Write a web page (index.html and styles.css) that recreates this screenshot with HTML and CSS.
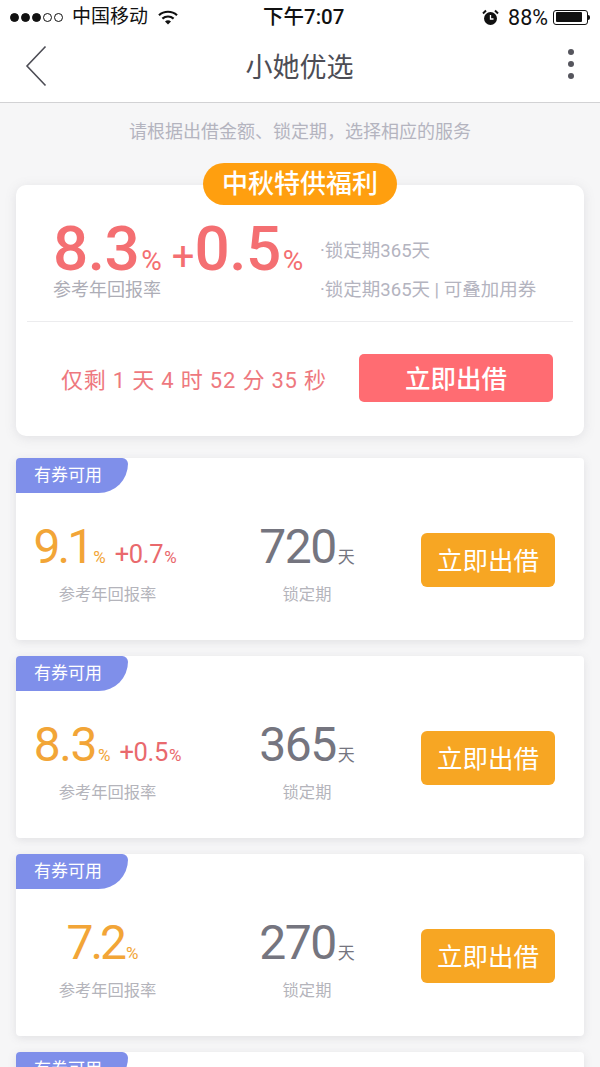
FILE: index.html
```html
<!DOCTYPE html>
<html lang="zh">
<head>
<meta charset="utf-8">
<title>小她优选</title>
<link rel="stylesheet" href="styles.css">
</head>
<body>
<div class="phone">
  <header class="top">
    <div class="status">
      <div class="status-left">
        <span class="dots"><i class="dot on"></i><i class="dot on"></i><i class="dot on"></i><i class="dot"></i><i class="dot"></i></span>
        <span class="carrier">中国移动</span>
        <svg class="wifi" width="20" height="15" viewBox="0 0 20 15"><path d="M1 5.200C6 .6 14 .6 19 5.200" fill="none" stroke="#111" stroke-width="2.200"/><path d="M4.400 8.600c3.200-2.800 8-2.800 11.200 0" fill="none" stroke="#111" stroke-width="2.200"/><path d="M7 11.400c1.800-1.400 4.200-1.400 6 0L10 14.600z" fill="#111"/></svg>
      </div>
      <div class="clock">下午7:07</div>
      <div class="status-right">
        <svg class="alarm" width="17" height="17" viewBox="0 0 17 17"><circle cx="8.500" cy="9.500" r="6.500" fill="#111"/><path d="M8.500 6v4H11.500" fill="none" stroke="#fff" stroke-width="1.300"/><path d="M1 4.500 4 1.500M16 4.500 13 1.500" stroke="#111" stroke-width="2"/></svg>
        <span class="pct">88%</span>
        <span class="battery"><span class="battery-fill"></span></span>
        <span class="battery-tip"></span>
      </div>
    </div>
    <nav class="nav">
      <svg class="back" width="22" height="42" viewBox="0 0 22 42"><path d="M20.500 1.500 2 21l18.500 19.500" fill="none" stroke="#4d4d55" stroke-width="1.600"/></svg>
      <h1 class="title">小她优选</h1>
      <div class="more"><i></i><i></i><i></i></div>
    </nav>
  </header>

  <p class="hint">请根据出借金额、锁定期，选择相应的服务</p>

  <section class="hero">
    <div class="pill">中秋特供福利</div>
    <div class="hero-top">
      <div class="hero-rate">
        <div class="hero-num"><span>8.3</span><small>%</small><em>+</em><span>0.5</span><small>%</small></div>
        <div class="hero-label">参考年回报率</div>
      </div>
      <ul class="hero-notes">
        <li>·锁定期365天</li>
        <li>·锁定期365天 | 可叠加用券</li>
      </ul>
    </div>
    <div class="hero-bottom">
      <div class="countdown">仅剩 1 天 4 时 52 分 35 秒</div>
      <button class="hero-btn">立即出借</button>
    </div>
  </section>

  <section class="card">
    <div class="tag">有券可用</div>
    <div class="row">
      <div class="col col-rate">
        <div class="val val-a"><span class="big tight orange">9.1</span><small class="orange">%</small><span class="plus">+0.7<small>%</small></span></div>
        <div class="cap">参考年回报率</div>
      </div>
      <div class="col col-term">
        <div class="val"><span class="big grey">720</span><small class="day">天</small></div>
        <div class="cap">锁定期</div>
      </div>
      <button class="btn">立即出借</button>
    </div>
  </section>

  <section class="card">
    <div class="tag">有券可用</div>
    <div class="row">
      <div class="col col-rate">
        <div class="val val-b"><span class="big orange">8.3</span><small class="orange">%</small><span class="plus">+0.5<small>%</small></span></div>
        <div class="cap">参考年回报率</div>
      </div>
      <div class="col col-term">
        <div class="val"><span class="big grey">365</span><small class="day">天</small></div>
        <div class="cap">锁定期</div>
      </div>
      <button class="btn">立即出借</button>
    </div>
  </section>

  <section class="card">
    <div class="tag">有券可用</div>
    <div class="row">
      <div class="col col-rate">
        <div class="val val-c"><span class="big tight orange">7.2</span><small class="orange">%</small></div>
        <div class="cap">参考年回报率</div>
      </div>
      <div class="col col-term">
        <div class="val"><span class="big grey">270</span><small class="day">天</small></div>
        <div class="cap">锁定期</div>
      </div>
      <button class="btn">立即出借</button>
    </div>
  </section>

  <section class="card">
    <div class="tag">有券可用</div>
  </section>
</div>
</body>
</html>
```
FILE: styles.css
```css
* { box-sizing: border-box; }
html, body { margin: 0; padding: 0; }
body {
  background: #f6f6f7;
  font-family: Roboto, "Noto Sans CJK SC", sans-serif;
  overflow: hidden;
}
.phone { width: 600px; height: 1067px; overflow: hidden; }

.top { background: #fff; height: 103px; border-bottom: 1px solid #d2d2d4; }
.status {
  height: 34px;
  display: grid;
  grid-template-columns: 253px auto 1fr;
  align-items: center;
  padding: 0 10px 0 10px;
  color: #111;
}
.status-left { display: flex; align-items: center; }
.dots { display: flex; gap: 2px; margin-right: 9px; }
.dot { width: 9px; height: 9px; border-radius: 50%; border: 1px solid #111; display: block; }
.dot.on { background: #111; }
.carrier { font-size: 19px; line-height: 34px; }
.wifi { margin-left: 10px; }
.clock { font-size: 20.500px; font-weight: 500; line-height: 34px; }
.status-right { display: flex; align-items: center; justify-content: flex-end; }
.pct { font-size: 21.500px; margin-left: 9px; margin-right: 5px; }
.alarm { display: block; }
.battery { width: 35px; height: 15px; border: 1px solid #111; border-radius: 3px; padding: 1.500px; display: block; }
.battery-fill { display: block; width: 88%; height: 100%; background: #111; border-radius: 1px; }
.battery-tip { width: 2px; height: 5px; background: #111; border-radius: 0 2px 2px 0; }

.nav {
  height: 68px;
  display: grid;
  grid-template-columns: 1fr auto 1fr;
  align-items: center;
  padding: 0 26px 0 25px;
}
.back { display: block; margin-top: -4px; }
.title { margin: 0; font-size: 27px; font-weight: 400; color: #4d4d55; line-height: 1; }
.more { display: flex; flex-direction: column; gap: 6px; margin-top: -8px; justify-self: end; }
.more i { display: block; width: 6px; height: 6px; border-radius: 50%; background: #55555d; }

.hint {
  margin: 0;
  height: 60px;
  text-align: center;
  font-size: 18px;
  line-height: 58px;
  color: #b4b4bf;
}

.hero {
  position: relative;
  margin: 22px 16px 22px;
  height: 251px;
  background: #fff;
  border-radius: 10px;
  box-shadow: 0 2px 12px rgba(120, 120, 130, .16);
  padding: 0 11px;
}
.pill {
  position: absolute;
  left: 187px;
  top: -22px;
  width: 194px;
  height: 42px;
  border-radius: 21px;
  background: #ff9f0f;
  color: #fff;
  font-size: 26px;
  font-weight: 500;
  line-height: 42px;
  text-align: center;
}
.hero-top {
  height: 137px;
  display: flex;
  border-bottom: 1px solid #ececee;
  padding: 36px 0 0 26px;
}
.hero-rate { width: 267px; flex: none; }
.hero-num { display: flex; align-items: baseline; color: #f46f72; line-height: 56px; height: 56px; font-weight: 500; white-space: nowrap; }
.hero-num span { font-size: 62px; letter-spacing: -.5px; }
.hero-num small { font-size: 28px; font-weight: 400; margin-left: 2px; }
.hero-num em { font-style: normal; font-size: 40px; font-weight: 400; margin-left: 10px; }
.hero-label { font-size: 18px; color: #adadb6; line-height: 26px; margin: 0; }
.hero-notes { list-style: none; margin: 0; padding: 17px 0 0 0; font-size: 18.500px; color: #b4b4bf; }
.hero-notes li { line-height: 26px; margin-bottom: 13px; white-space: nowrap; }
.hero-bottom { display: flex; align-items: center; height: 113px; padding: 0 20px 1px 34px; justify-content: space-between; }
.countdown { font-size: 22px; color: #ee787e; letter-spacing: .8px; }
.hero-btn {
  width: 194px; height: 48px;
  padding: 0 0 3px;
  border: 0; border-radius: 5px;
  background: #ff6c72; color: #fff;
  font: 500 25.500px Roboto, "Noto Sans CJK SC", sans-serif;
}

.card {
  height: 182px;
  margin: 0 16px 16px;
  background: #fff;
  border-radius: 4px;
  box-shadow: 0 2px 8px rgba(120, 120, 130, .16);
  overflow: hidden;
}
.tag {
  width: 112px; height: 35px;
  background: #7f8fea;
  color: #fff;
  font-size: 17px;
  line-height: 35px;
  padding-left: 18px;
  border-radius: 0 6px 30px 0;
}
.row { display: flex; align-items: flex-start; padding-top: 26px; }
.col { display: flex; flex-direction: column; align-items: center; }
.col-rate { width: 183px; flex: none; }
.col-term { width: 216px; flex: none; }
.val { height: 56px; display: flex; align-items: baseline; justify-content: center; line-height: 56px; white-space: nowrap; }
.val-a { padding-right: 5px; }
.val-c { padding-right: 10px; }
.big { font-size: 48px; font-weight: 400; letter-spacing: -1.500px; }
.big.tight { letter-spacing: -3px; }
.orange { color: #f2a537; }
.grey { color: #75757f; }
.val small { font-size: 17px; margin-left: 2px; }
.day { color: #75757f; }
.plus { font-size: 25.500px; color: #e9696d; margin-left: 9px; letter-spacing: -.3px; }
.plus small { font-size: 17px; margin-left: 1px; }
.cap { font-size: 16.300px; color: #b4b4bb; line-height: 24px; margin-top: 8px; }
.btn {
  width: 134px; height: 54px;
  padding: 0 0 4px;
  margin-top: 14px; margin-left: 6px;
  border: 0; border-radius: 6px;
  background: #f7a623; color: #fff;
  font: 400 25.500px Roboto, "Noto Sans CJK SC", sans-serif;
}
```
